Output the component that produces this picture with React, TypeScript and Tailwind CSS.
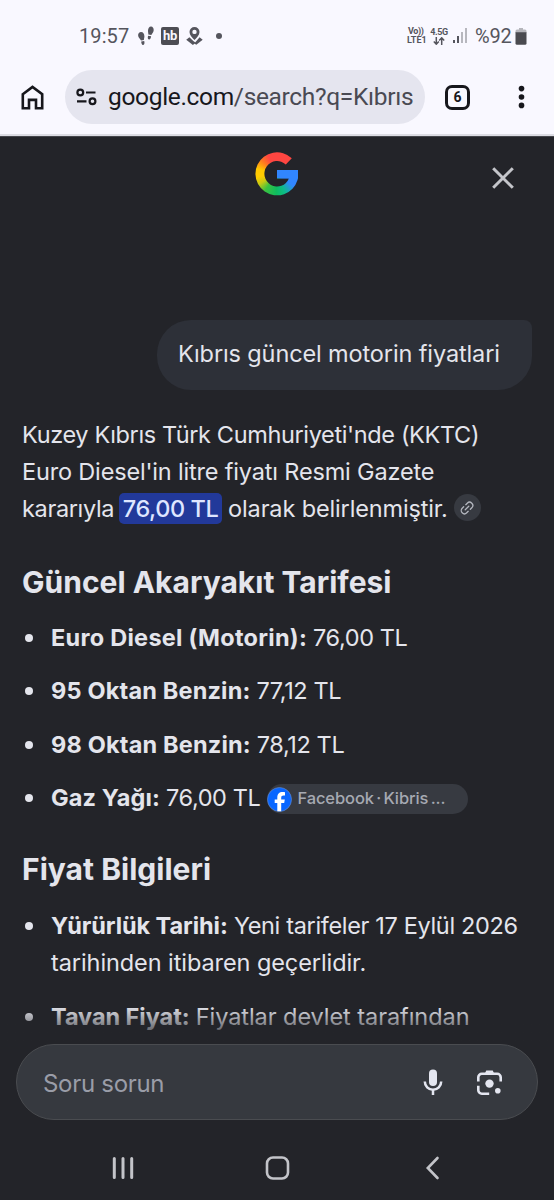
import type { ReactNode } from "react";

const prices = [
  { label: "Euro Diesel (Motorin):", value: "76,00 TL", tracking: "tracking-[0.27px]" },
  { label: "95 Oktan Benzin:", value: "77,12 TL", tracking: "tracking-[0.18px]" },
  { label: "98 Oktan Benzin:", value: "78,12 TL", tracking: "tracking-[0.18px]" },
  { label: "Gaz Yağı:", value: "76,00 TL", tracking: "tracking-[0.13px]", source: "Facebook · Kibris ..." },
];

function StatusBar() {
  return (
    <div className="flex h-[70px] items-center pt-[2px] pr-[27px] pl-[79px] text-[#55555d]">
      <span className="w-[50px] text-[20px] tracking-[0.1px] whitespace-nowrap">19:57</span>
      <svg className="ml-[9px]" width="16" height="20" viewBox="0 0 16 20" fill="currentColor">
        <path d="M3 6c2.200 0 3.300 2 3.400 4.200.1 1.600-.6 2.600-.5 3.800l-2.900.5C2.600 13 .1 11.600.1 9.200.1 7.400 1.300 6 3 6z" />
        <path d="M3.200 15.400l3-.5c.5 1.700.4 3.900-1 4-1.400.2-1.900-1.800-2-3.500z" />
        <path d="M13 .5c1.800 0 2.800 1.900 2.700 3.700-.1 2.100-1.900 3.400-2.300 4.900l-3.100-.5c.2-1.300-.4-2.400-.3-3.900C10.100 2.400 11.200.5 13 .5z" />
        <path d="M10.100 9.700l3 .6c-.2 1.800-.9 3.400-2.200 3.200-1.300-.2-1.300-2.200-.8-3.800z" />
      </svg>
      <span className="ml-[7px] flex size-[18px] items-center justify-center rounded-[2px] bg-[#4d4d54] text-[13px] font-bold tracking-[-0.3px] text-[#f9f8ff]">
        hb
      </span>
      <svg className="ml-[7px]" width="17" height="18" viewBox="0 0 17 18" fill="currentColor">
        <path
          fillRule="evenodd"
          d="M8.500 0a5 5 0 0 1 5 5c0 3.200-2.700 5.500-5 8-2.300-2.500-5-4.800-5-8a5 5 0 0 1 5-5zm0 2.700a2.200 2.200 0 1 0 0 4.400 2.200 2.200 0 0 0 0-4.400z"
        />
        <path d="M3.400 10.200l3.900 3.800 2.400 1.700L6.900 17.900.2 12.800zM13.600 10.200l3.100 2.600-6.400 5-2-1.400z" />
      </svg>
      <span className="ml-[13px] size-[6px] rounded-full bg-[#55555d]" />

      <div className="ml-auto flex items-center">
        <div className="w-[21px] text-[9px] leading-[9px] font-bold whitespace-nowrap">
          <div className="pl-[1px] tracking-[-0.4px]">Vo))</div>
          <div>LTE1</div>
        </div>
        <div className="ml-[2px] flex w-[18px] flex-col items-center text-[9px] leading-[9px] font-bold">
          <span className="tracking-[-0.4px]">4.5G</span>
          <svg width="12" height="8" viewBox="0 0 12 8" fill="none" stroke="currentColor" strokeWidth="1.500">
            <path d="M3.300 0v7M.8 4.600l2.500 2.600 2.500-2.600M8.700 8V1M6.200 3.400L8.700.8l2.500 2.600" />
          </svg>
        </div>
        <svg className="ml-[5px]" width="15" height="16" viewBox="0 0 15 16" fill="currentColor">
          <rect x="0" y="12" width="2" height="3" />
          <rect x="4" y="8" width="2" height="7" />
          <rect x="8" y="4" width="2" height="11" opacity=".4" />
          <rect x="12" y="0" width="2" height="15" opacity=".4" />
        </svg>
        <span className="ml-[7px] w-[38px] text-[20px] tracking-[-0.2px] whitespace-nowrap">%92</span>
        <svg className="ml-[2px]" width="12" height="17" viewBox="0 0 12 17">
          <path d="M4 0h4v1.500h2a1.500 1.500 0 0 1 1.500 1.500v2H.5V3A1.500 1.500 0 0 1 2 1.500h2z" fill="#b5b5bb" />
          <path d="M.5 4.200h11v11a1.500 1.500 0 0 1-1.500 1.500H2A1.500 1.500 0 0 1 .5 15.200z" fill="#4a4a50" />
        </svg>
      </div>
    </div>
  );
}

function BrowserBar() {
  return (
    <div className="flex h-[54px] items-center text-[#17171c]">
      <svg className="ml-[21px]" width="23" height="25" viewBox="0 0 23 25" fill="none" stroke="currentColor" strokeWidth="2.600">
        <path d="M1.800 9.200L11.500 1.900l9.700 7.300v14H15v-8.300H8v8.300H1.800z" />
      </svg>
      <div className="ml-[21px] flex h-[54px] w-[360px] items-center rounded-full bg-[#e5e5ef]">
        <svg className="ml-[11px]" width="21" height="18" viewBox="0 0 21 18" fill="none" stroke="currentColor" strokeWidth="2.200">
          <circle cx="4.300" cy="4.500" r="2.900" />
          <path d="M10 4.500h9.500M1 13.300h9.500" />
          <circle cx="16.500" cy="13.300" r="2.900" />
        </svg>
        <span className="ml-[11px] text-[24.500px] tracking-[-0.33px] whitespace-nowrap">
          google.com<span className="text-[#4a4a53]">/search?q=Kıbrıs</span>
        </span>
      </div>
      <span className="ml-[20px] flex size-[25px] items-center justify-center rounded-[7px] border-3 border-[#17171c] text-[14px] font-bold">
        6
      </span>
      <svg className="ml-[48px]" width="7" height="24" viewBox="0 0 7 24" fill="currentColor">
        <circle cx="3.500" cy="3.600" r="2.800" />
        <circle cx="3.500" cy="12" r="2.800" />
        <circle cx="3.500" cy="20.400" r="2.800" />
      </svg>
    </div>
  );
}

function GoogleMark() {
  return (
    <div className="h-[44px] w-[43px] bg-[conic-gradient(#ff4641_0deg,#ff4641_50deg,#3186ff_60deg,#3186ff_125deg,#0ebc8a_155deg,#0ebc5f_180deg,#3cc240_215deg,#c9c912_240deg,#ffcc00_262deg,#ffc800_285deg,#ff7a20_312deg,#ff4641_335deg,#ff4641_360deg)] [clip-path:url(#g-mark)]">
      <svg width="43" height="44" viewBox="0 0 43 44">
        <defs>
          <clipPath id="g-mark">
            <path d="M36.300 6.300A21.500 21.500 0 1 0 42.600 18H21.500V26.500H33.400A12.700 12.700 0 1 1 30.300 12.500Z" />
          </clipPath>
        </defs>
        <rect x="21.500" y="18" width="21.500" height="8.500" fill="#3186ff" />
      </svg>
    </div>
  );
}

function SourceChip({ children }: { children: ReactNode }) {
  return (
    <span className="mt-[3px] ml-[7px] flex h-[30px] w-[201px] items-center rounded-full bg-[#373a41]">
      <svg width="25" height="25" viewBox="0 0 25 25">
        <circle cx="12.500" cy="12.500" r="12" fill="#0866ff" stroke="#6f8fc9" strokeWidth=".6" />
        <path
          d="M10.300 24.200v-8.100H7.700v-3.700h2.600v-1.700c0-4 1.800-5.800 5.500-5.800.8 0 1.700.1 2.200.3v3.300h-1.300c-1.800 0-2.500.7-2.500 2.400v1.500h3.600l-.6 3.700h-3v8.100z"
          fill="#fff"
        />
      </svg>
      <span className="mb-[2px] ml-[5px] text-[16.500px] font-medium tracking-[-0.1px] [word-spacing:-2px] whitespace-nowrap text-[#a6a9b2]">
        {children}
      </span>
    </span>
  );
}

function Bullet({ children }: { children: ReactNode }) {
  return (
    <li className="flex">
      <span className="mt-[15px] mr-[18px] ml-[3px] size-[8px] shrink-0 rounded-full bg-[#e4e5ec]" />
      <div className="flex-1">{children}</div>
    </li>
  );
}

function Answer() {
  return (
    <div className="mt-[26px] px-[22px] text-[23.500px] leading-[37px] tracking-[-0.4px] whitespace-nowrap">
      <p>
        <span className="tracking-[-0.36px]">Kuzey Kıbrıs Türk Cumhuriyeti'nde (KKTC)</span>
        <br />
        <span className="tracking-[-0.17px]">Euro Diesel'in litre fiyatı Resmi Gazete</span>
      </p>
      <p className="flex items-center">
        <span className="tracking-[-0.35px]">kararıyla</span>
        <mark className="mr-[6px] ml-[5px] flex h-[31px] w-[103px] items-center justify-center rounded-[5px] bg-[#22399a] font-medium text-[#dfe6ff]">
          76,00 TL
        </mark>
        <span className="tracking-[-0.14px]">olarak belirlenmiştir.</span>
        <span className="mb-[2px] ml-[6px] flex size-[27px] items-center justify-center rounded-full bg-[#373a41] text-[#b4b7bf]">
          <svg width="14" height="14" viewBox="0 0 14 14" fill="none" stroke="currentColor" strokeWidth="1.300" strokeLinecap="round">
            <g transform="rotate(-45 7 7)">
              <path d="M5.500 3.800H3.400a3.200 3.200 0 0 0 0 6.400h2.100M8.500 3.800h2.100a3.200 3.200 0 0 1 0 6.400H8.500M4.500 7h5" />
            </g>
          </svg>
        </span>
      </p>

      <h2 className="mt-[37px] text-[30px] leading-[36px] font-bold tracking-[0.01px]">Güncel Akaryakıt Tarifesi</h2>
      <ul className="mt-[19px] space-y-[16.400px]">
        {prices.map((item) => (
          <Bullet key={item.label}>
            <div className="flex items-center">
              <strong className={`mr-[6px] font-bold ${item.tracking}`}>{item.label}</strong>
              {item.value}
              {item.source && <SourceChip>{item.source}</SourceChip>}
            </div>
          </Bullet>
        ))}
      </ul>

      <h2 className="mt-[35px] text-[30px] leading-[36px] font-bold tracking-[0.02px]">Fiyat Bilgileri</h2>
      <ul className="mt-[20px] space-y-[16.500px]">
        <Bullet>
          <strong className="font-bold tracking-[-0.07px]">Yürürlük Tarihi:</strong>{" "}
          <span className="tracking-[-0.34px]">Yeni tarifeler 17 Eylül 2026</span>
          <br />
          <span className="tracking-[-0.08px]">tarihinden itibaren geçerlidir.</span>
        </Bullet>
        <Bullet>
          <strong className="font-bold tracking-[-0.05px]">Tavan Fiyat:</strong>{" "}
          <span className="tracking-[-0.06px]">Fiyatlar devlet tarafından</span>
        </Bullet>
      </ul>
    </div>
  );
}

function AskBar() {
  return (
    <div className="flex h-[76px] items-center rounded-full border border-[#4a4c50] bg-[#36393f] pl-[26px] text-[#e4e6f0]">
      <span className="pt-[3px] text-[24px] tracking-[-0.3px] text-[#9a9da8]">Soru sorun</span>
      <svg className="ml-auto" width="20" height="28" viewBox="0 0 20 28" fill="none" stroke="currentColor" strokeWidth="2.500">
        <rect x="6" y="1.500" width="8" height="16.500" rx="4" fill="currentColor" stroke="none" />
        <path d="M1.800 13.500c0 4.700 3.600 8.200 8.200 8.200s8.200-3.500 8.200-8.200M10 21.500V27" />
      </svg>
      <svg className="mr-[34px] ml-[33px]" width="27" height="27" viewBox="0 0 27 27" fill="none" stroke="currentColor" strokeWidth="2.600">
        <path d="M2.300 12.500V8.300a3.500 3.500 0 0 1 3.500-3.500h15.400a3.500 3.500 0 0 1 3.500 3.500v4.200M2.300 16.800v4.400a3.500 3.500 0 0 0 3.500 3.500h7.400" />
        <path d="M10.300 4.500l.8-1.800h4.800l.8 1.800z" fill="currentColor" />
        <circle cx="13.500" cy="14.600" r="4.200" fill="currentColor" stroke="none" />
        <circle cx="21.800" cy="21.700" r="2.800" fill="currentColor" stroke="none" />
      </svg>
    </div>
  );
}

export default function App() {
  return (
    <div className="flex h-[1200px] w-[554px] flex-col overflow-hidden bg-[#232429] font-['Inter',sans-serif] text-[#e4e5ec]">
      <div className="h-[136px] shrink-0 border-b-2 border-[#dcdce3] bg-[#f9f8ff] font-['Roboto',sans-serif]">
        <StatusBar />
        <BrowserBar />
      </div>

      <header className="grid shrink-0 grid-cols-3 border-t border-[#45464b] pt-[15px]">
        <span />
        <div className="flex justify-center">
          <GoogleMark />
        </div>
        <svg className="mt-[15px] mr-[40px] justify-self-end" width="22" height="22" viewBox="0 0 22 22" fill="none" stroke="#c4c5ca" strokeWidth="3">
          <path d="M1.200 1.200l19.600 19.600M20.800 1.200L1.200 20.800" />
        </svg>
      </header>

      <main className="relative h-[848px] shrink-0 overflow-hidden pt-[124px]">
        <div className="mr-[22px] ml-auto flex h-[70px] w-[375px] items-center rounded-[34px] rounded-tr-[8px] bg-[#2d3038] pb-[2px] pl-[21px] text-[23.500px] tracking-[-0.12px] whitespace-nowrap">
          Kıbrıs güncel motorin fiyatlari
        </div>
        <Answer />
        {/* fade under the ask bar */}
        <div className="absolute inset-x-0 bottom-0 h-[38px] bg-linear-to-b from-transparent to-[#232429]" />
      </main>

      <div className="px-[16px]">
        <AskBar />
      </div>

      <nav className="mt-[36px] flex items-center text-[#c3c4c9]">
        <svg className="ml-[112px]" width="22" height="24" viewBox="0 0 22 24" stroke="currentColor" strokeWidth="3" strokeLinecap="round">
          <path d="M2.300 2.500v19M11 2.500v19M19.700 2.500v19" />
        </svg>
        <svg className="ml-[131px]" width="25" height="24" viewBox="0 0 25 24" fill="none" stroke="currentColor" strokeWidth="2.600">
          <rect x="2" y="1.500" width="21" height="21" rx="6" />
        </svg>
        <svg className="ml-[135px]" width="15" height="24" viewBox="0 0 15 24" fill="none" stroke="currentColor" strokeWidth="2.600" strokeLinecap="round">
          <path d="M12.500 2L2.800 12l9.700 10" />
        </svg>
      </nav>
    </div>
  );
}
